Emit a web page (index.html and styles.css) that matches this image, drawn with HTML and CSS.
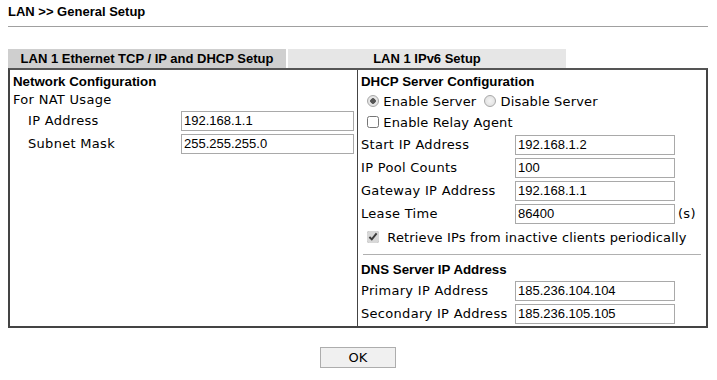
FILE: index.html
```html
<!DOCTYPE html>
<html lang="en">
<head>
  <meta charset="UTF-8">
  <link rel="stylesheet" href="styles.css">
  <title>LAN General Setup</title>
</head>
<body>
  <div class="page">
    <h1 class="title">LAN &gt;&gt; General Setup</h1>

    <div class="tabs">
      <div class="tab tab-active">LAN 1 Ethernet TCP / IP and DHCP Setup</div>
      <div class="tab">LAN 1 IPv6 Setup</div>
    </div>

    <div class="panel">
      <!-- left: network config -->
      <div class="cell cell-left">
        <div class="head">Network Configuration</div>
        <div class="sub">For NAT Usage</div>
        <div class="row row-indent">
          <span class="label">IP Address</span>
          <input class="field field-wide" type="text" value="192.168.1.1">
        </div>
        <div class="row row-indent">
          <span class="label">Subnet Mask</span>
          <input class="field field-wide" type="text" value="255.255.255.0">
        </div>
      </div>

      <!-- right: dhcp server -->
      <div class="cell cell-right">
        <div class="head">DHCP Server Configuration</div>
        <div class="opt">
          <label><input class="radio" type="radio" name="srv" checked> Enable Server</label>
          <label><input class="radio" type="radio" name="srv"> Disable Server</label>
        </div>
        <div class="opt">
          <label><input type="checkbox"> Enable Relay Agent</label>
        </div>
        <div class="row">
          <span class="label">Start IP Address</span>
          <input class="field" type="text" value="192.168.1.2">
        </div>
        <div class="row">
          <span class="label">IP Pool Counts</span>
          <input class="field" type="text" value="100">
        </div>
        <div class="row">
          <span class="label">Gateway IP Address</span>
          <input class="field" type="text" value="192.168.1.1">
        </div>
        <div class="row">
          <span class="label">Lease Time</span>
          <input class="field" type="text" value="86400">
          <span class="unit">(s)</span>
        </div>
        <div class="opt opt-retrieve">
          <label><input type="checkbox" checked> Retrieve IPs from inactive clients periodically</label>
        </div>
        <hr class="sep">
        <div class="head">DNS Server IP Address</div>
        <div class="row">
          <span class="label">Primary IP Address</span>
          <input class="field" type="text" value="185.236.104.104">
        </div>
        <div class="row">
          <span class="label">Secondary IP Address</span>
          <input class="field" type="text" value="185.236.105.105">
        </div>
      </div>
    </div>

    <div class="actions">
      <button class="btn">OK</button>
    </div>
  </div>
</body>
</html>
```

FILE: styles.css
```css
body {
  margin: 0;
  padding: 0;
  background-color: #fff;
  color: #000;
  font-family: "DejaVu Sans", Verdana, sans-serif;
  font-size: 13px;
}

.page {
  width: 700px;
  padding: 0 8px;
}

.title {
  font-family: "Liberation Sans", Arial, sans-serif;
  font-size: 13px;
  font-weight: bold;
  margin: 0;
  padding: 4px 0 7px 0;
  border-bottom: 1px solid #a0a0a0;
}

.tabs {
  display: flex;
  gap: 2px;
  margin-top: 22px;
}

.tab {
  width: 278px;
  height: 19px;
  line-height: 19px;
  text-align: center;
  background-color: #e6e6e6;
  font-family: "Liberation Sans", Arial, sans-serif;
  font-size: 13px;
  font-weight: bold;
}

.tab-active {
  background-color: #cfcfcf;
}

.panel {
  display: grid;
  grid-template-columns: 348px 1fr;
  border: 2px solid #444;
  border-top-color: #555;
  height: 256px;
}

.cell {
  padding: 3px 3px 0 3px;
}

.cell-left {
  border-right: 1px solid #444;
}

.head {
  font-family: "Liberation Sans", Arial, sans-serif;
  font-size: 13.3px;
  font-weight: bold;
  height: 18px;
  line-height: 18px;
}

.sub,
.label,
.unit {
  letter-spacing: 0.3px;
}

.sub {
  height: 18px;
  line-height: 18px;
}

.row {
  display: flex;
  align-items: center;
  height: 23px;
}

.row-indent {
  padding-left: 15px;
}

.label {
  width: 154px;
}

.field {
  box-sizing: border-box;
  width: 160px;
  height: 20px;
  margin: 0;
  padding: 0 2px;
  border: 1px solid #a9a9a9;
  font-family: "Liberation Sans", Arial, sans-serif;
  font-size: 13px;
  color: #000;
}

.field-wide {
  width: 173px;
}

.unit {
  margin-left: 3px;
}

.opt {
  height: 21px;
  display: flex;
  align-items: center;
  padding-left: 6px;
}

.opt label {
  margin-right: 8px;
  letter-spacing: 0.15px;
}

.opt input {
  margin: 0;
  width: 12px;
  height: 12px;
  vertical-align: -1px;
  accent-color: #d8d8d8;
}

.opt .radio {
  appearance: none;
  -webkit-appearance: none;
  box-sizing: border-box;
  width: 12px;
  height: 12px;
  border: 1px solid #a8a8a8;
  border-radius: 50%;
  background: radial-gradient(circle, #f4f4f4 0, #dcdcdc 100%);
}

.opt .radio:checked {
  background: radial-gradient(circle, #555 0, #555 2.5px, #e8e8e8 3px, #dcdcdc 100%);
}

.opt-retrieve {
  padding-left: 6px;
  height: 24px;
}

.opt-retrieve input {
  margin-right: 4px;
}

.sep {
  border: 0;
  border-top: 1px solid #b0b0b0;
  margin: 5px 2px 6px 2px;
}

.actions {
  display: flex;
  justify-content: center;
  margin-top: 19px;
}

.btn {
  width: 76px;
  height: 21px;
  padding: 0;
  background-color: #f0f0f0;
  border: 1px solid #adadad;
  font-family: "DejaVu Sans", Verdana, sans-serif;
  font-size: 13px;
}
```
